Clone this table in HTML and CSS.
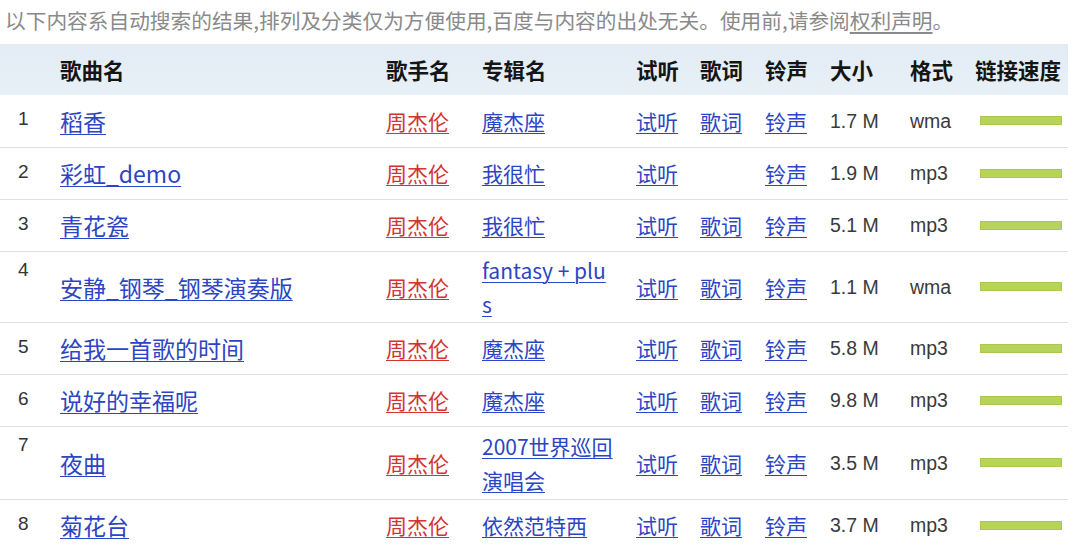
FILE: index.html
```html
<!DOCTYPE html>
<html lang="zh-CN">
<head>
<meta charset="utf-8">
<title>歌曲搜索结果</title>
<link rel="stylesheet" href="styles.css">
</head>
<body>
<p class="note">以下内容系自动搜索的结果,排列及分类仅为方便使用,百度与内容的出处无关。使用前,请参阅<a class="note-link" href="#">权利声明</a>。</p>
<table class="songs">
  <colgroup>
    <col class="c-num"><col class="c-song"><col class="c-singer"><col class="c-album">
    <col class="c-try"><col class="c-lrc"><col class="c-ring"><col class="c-size">
    <col class="c-fmt"><col class="c-speed">
  </colgroup>
  <thead>
    <tr class="head">
      <th></th><th>歌曲名</th><th>歌手名</th><th>专辑名</th><th>试听</th><th>歌词</th><th>铃声</th><th>大小</th><th>格式</th><th>链接速度</th>
    </tr>
  </thead>
  <tbody>
    <tr>
      <td class="num">1</td><td class="song"><a href="#">稻香</a></td><td class="singer"><a href="#">周杰伦</a></td><td class="album"><a href="#">魔杰座</a></td>
      <td><a href="#">试听</a></td><td><a href="#">歌词</a></td><td><a href="#">铃声</a></td><td class="size">1.7 M</td><td class="fmt">wma</td><td><span class="bar"></span></td>
    </tr>
    <tr>
      <td class="num">2</td><td class="song"><a href="#">彩虹_demo</a></td><td class="singer"><a href="#">周杰伦</a></td><td class="album"><a href="#">我很忙</a></td>
      <td><a href="#">试听</a></td><td></td><td><a href="#">铃声</a></td><td class="size">1.9 M</td><td class="fmt">mp3</td><td><span class="bar"></span></td>
    </tr>
    <tr>
      <td class="num">3</td><td class="song"><a href="#">青花瓷</a></td><td class="singer"><a href="#">周杰伦</a></td><td class="album"><a href="#">我很忙</a></td>
      <td><a href="#">试听</a></td><td><a href="#">歌词</a></td><td><a href="#">铃声</a></td><td class="size">5.1 M</td><td class="fmt">mp3</td><td><span class="bar"></span></td>
    </tr>
    <tr class="tall">
      <td class="num">4</td><td class="song"><a href="#">安静_钢琴_钢琴演奏版</a></td><td class="singer"><a href="#">周杰伦</a></td><td class="album"><a href="#">fantasy + plu<br>s</a></td>
      <td><a href="#">试听</a></td><td><a href="#">歌词</a></td><td><a href="#">铃声</a></td><td class="size">1.1 M</td><td class="fmt">wma</td><td><span class="bar"></span></td>
    </tr>
    <tr>
      <td class="num">5</td><td class="song"><a href="#">给我一首歌的时间</a></td><td class="singer"><a href="#">周杰伦</a></td><td class="album"><a href="#">魔杰座</a></td>
      <td><a href="#">试听</a></td><td><a href="#">歌词</a></td><td><a href="#">铃声</a></td><td class="size">5.8 M</td><td class="fmt">mp3</td><td><span class="bar"></span></td>
    </tr>
    <tr>
      <td class="num">6</td><td class="song"><a href="#">说好的幸福呢</a></td><td class="singer"><a href="#">周杰伦</a></td><td class="album"><a href="#">魔杰座</a></td>
      <td><a href="#">试听</a></td><td><a href="#">歌词</a></td><td><a href="#">铃声</a></td><td class="size">9.8 M</td><td class="fmt">mp3</td><td><span class="bar"></span></td>
    </tr>
    <tr class="tall tall-x">
      <td class="num">7</td><td class="song"><a href="#">夜曲</a></td><td class="singer"><a href="#">周杰伦</a></td><td class="album"><a href="#">2007世界巡回<br>演唱会</a></td>
      <td><a href="#">试听</a></td><td><a href="#">歌词</a></td><td><a href="#">铃声</a></td><td class="size">3.5 M</td><td class="fmt">mp3</td><td><span class="bar"></span></td>
    </tr>
    <tr>
      <td class="num">8</td><td class="song"><a href="#">菊花台</a></td><td class="singer"><a href="#">周杰伦</a></td><td class="album"><a href="#">依然范特西</a></td>
      <td><a href="#">试听</a></td><td><a href="#">歌词</a></td><td><a href="#">铃声</a></td><td class="size">3.7 M</td><td class="fmt">mp3</td><td><span class="bar"></span></td>
    </tr>
  </tbody>
</table>
</body>
</html>
```
FILE: styles.css
```css
html, body {
  margin: 0;
  padding: 0;
  background: #ffffff;
}

body {
  font-family: "Liberation Sans", "Noto Sans CJK SC", sans-serif;
  color: #333333;
  overflow: hidden;
}

.note {
  margin: 8px 0 12px 5px;
  font-size: 20.7px;
  line-height: 24px;
  color: #8a8a8a;
  font-family: "Noto Sans CJK SC", sans-serif;
  white-space: nowrap;
}

.note-link {
  color: #8a8a8a;
  text-decoration: underline;
  text-underline-offset: 3px;
}

.songs {
  width: 1068px;
  border-collapse: collapse;
  table-layout: fixed;
  font-family: "Noto Sans CJK SC", sans-serif;
  font-size: 21px;
}

.c-num { width: 60px; }
.c-song { width: 326px; }
.c-singer { width: 96px; }
.c-album { width: 154px; }
.c-try { width: 64px; }
.c-lrc { width: 65px; }
.c-ring { width: 65px; }
.c-size { width: 80px; }
.c-fmt { width: 65px; }
.c-speed { width: 93px; }

.head {
  height: 51px;
  background: linear-gradient(#e2ecf5, #e8f0f7);
}

.head th {
  text-align: left;
  font-size: 21.5px;
  font-weight: bold;
  color: #151515;
  padding: 0;
  white-space: nowrap;
}

tbody tr {
  height: 52px;
  border-bottom: 1px solid #e0e0e0;
}

tbody tr.tall {
  height: 70px;
}

tbody tr.tall-x {
  height: 73px;
}

tbody td {
  padding: 1px 0;
  vertical-align: middle;
  line-height: 34px;
  white-space: nowrap;
}

td.num {
  vertical-align: top;
  padding-top: 7px;
  padding-left: 18px;
  font-family: "Liberation Sans", sans-serif;
  font-size: 19px;
  color: #333333;
}

tr.tall td.num {
  padding-top: 1px;
}

a {
  color: #2c45c4;
  text-decoration: underline;
  text-underline-offset: 3px;
  text-decoration-thickness: 1px;
}

td.song {
  font-size: 23px;
}

td.singer a {
  color: #d2342f;
}

td.album {
  line-height: 34px;
}

.size, .fmt {
  font-family: "Liberation Sans", sans-serif;
  font-size: 19.5px;
  color: #3a3a3a;
}

.bar {
  display: block;
  width: 82px;
  height: 9px;
  margin-left: 5px;
  background: #b7d35a;
  border: 1px solid #a9c84c;
  box-sizing: border-box;
}
```
